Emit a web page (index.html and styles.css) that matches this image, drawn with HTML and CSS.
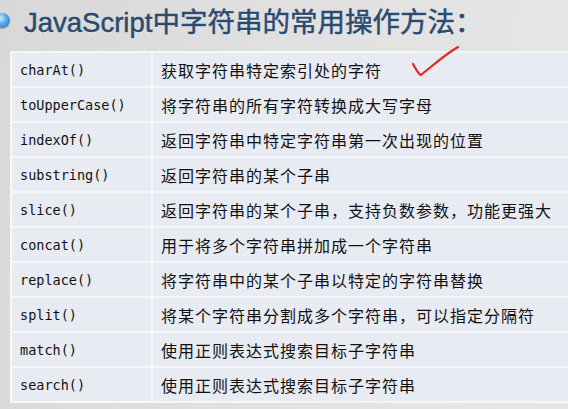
FILE: index.html
```html
<!DOCTYPE html>
<html lang="zh-CN">
<head>
    <meta charset="UTF-8">
    <meta name="viewport" content="width=device-width, initial-scale=1.0">
    <title>JavaScript中字符串的常用操作方法</title>
    <link rel="stylesheet" href="styles.css">
</head>
<body>
    <div class="slide">
        <h1 class="title"><span class="bullet"></span>JavaScript中字符串的常用操作方法：</h1>

        <!-- 字符串方法表 -->
        <table class="methods">
            <tr><td class="name">charAt()</td><td class="desc">获取字符串特定索引处的字符</td></tr>
            <tr><td class="name">toUpperCase()</td><td class="desc">将字符串的所有字符转换成大写字母</td></tr>
            <tr><td class="name">indexOf()</td><td class="desc">返回字符串中特定字符串第一次出现的位置</td></tr>
            <tr><td class="name">substring()</td><td class="desc">返回字符串的某个子串</td></tr>
            <tr><td class="name">slice()</td><td class="desc">返回字符串的某个子串，支持负数参数，功能更强大</td></tr>
            <tr><td class="name">concat()</td><td class="desc">用于将多个字符串拼加成一个字符串</td></tr>
            <tr><td class="name">replace()</td><td class="desc">将字符串中的某个子串以特定的字符串替换</td></tr>
            <tr><td class="name">split()</td><td class="desc">将某个字符串分割成多个字符串，可以指定分隔符</td></tr>
            <tr><td class="name">match()</td><td class="desc">使用正则表达式搜索目标子字符串</td></tr>
            <tr><td class="name">search()</td><td class="desc">使用正则表达式搜索目标子字符串</td></tr>
        </table>

        <!-- 红色勾 -->
        <svg class="check" width="60" height="40" viewBox="0 0 60 40">
            <path d="M3 20 C6 25 8 30 11 31 C20 24 34 11 48 3" fill="none" stroke="#e02828" stroke-width="2.2" stroke-linecap="round"/>
        </svg>
    </div>
</body>
</html>
```

FILE: styles.css
```css
body {
    margin: 0;
    overflow: hidden;
    background: #dcdcdc;
}
.slide {
    position: relative;
    width: 568px;
    height: 409px;
    overflow: hidden;
    background: linear-gradient(100deg, #d8d8d8 0%, #e2e2e2 55%, #e6e6e6 100%);
}
/* 标题 */
.title {
    display: flex;
    align-items: center;
    height: 40px;
    margin: 0;
    font-family: "Liberation Sans", "Noto Sans CJK SC", sans-serif;
    font-size: 27.5px;
    font-weight: normal;
    color: #2b4a6f;
    -webkit-text-stroke: 0.5px #2b4a6f;
    text-shadow: 0 1px 1px rgba(255, 255, 255, 0.6);
    white-space: nowrap;
}
.bullet {
    width: 15px;
    height: 15px;
    margin-left: -5px;
    margin-right: 14px;
    border-radius: 50%;
    background: radial-gradient(circle at 40% 35%, #cfe9ff 0%, #5aa9ec 40%, #1e6fc4 100%);
    box-shadow: 0 1px 1px rgba(0, 0, 0, 0.25);
}
/* 表格 */
.methods {
    margin: 11px 0 0 10px;
    width: 580px;
    border-collapse: collapse;
    background: #e8ebf2;
}
.methods td {
    height: 33px;
    padding: 0 8px;
    border: 2px solid #f6f7fa;
    white-space: nowrap;
}
.name {
    width: 123px;
    font-family: "DejaVu Sans Mono", monospace;
    font-size: 13.5px;
    color: #111;
}
.desc {
    font-family: "Noto Sans CJK SC", sans-serif;
    font-size: 16px;
    letter-spacing: 1px;
    color: #111;
}
.check {
    position: absolute;
    left: 410px;
    top: 44px;
}
```
